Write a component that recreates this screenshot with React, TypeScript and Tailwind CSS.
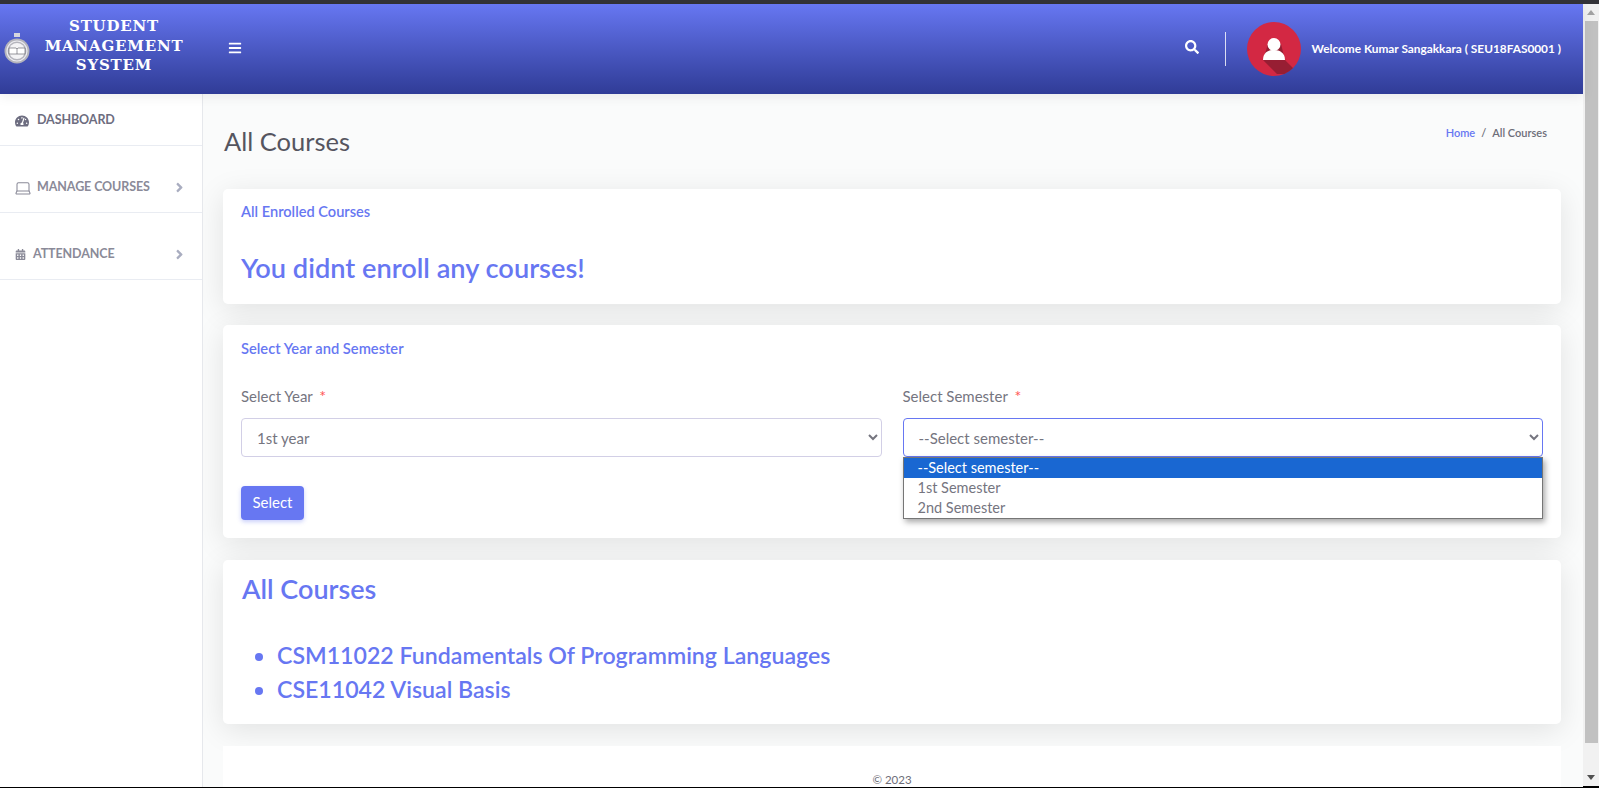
import React from 'react';
import { FaAngleRight, FaBars, FaCalendarAlt, FaSearch, FaTachometerAlt } from 'react-icons/fa';
import { Laptop } from 'lucide-react';

const font = "font-['Lato','Open_Sans',sans-serif]";

const Logo = () => (
  <svg width="26" height="32" viewBox="0 0 26 32" className="shrink-0">
    <rect x="10" y="0" width="6" height="4" fill="#d5d5de" />
    <circle cx="13" cy="18" r="12.5" fill="#b4b4bc" />
    <circle cx="13" cy="18" r="10" fill="none" stroke="#ececf0" strokeWidth="1.2" />
    <circle cx="13" cy="18" r="8" fill="#f4f4f6" />
    <path d="M5 15h7l1 1 1-1h7v6h-16z" fill="#fff" stroke="#55555f" strokeWidth="0.6" />
    <path d="M13 16v5" stroke="#55555f" strokeWidth="0.6" />
  </svg>
);

const Avatar = () => (
  <div className="w-[54px] h-[54px] rounded-full bg-[#d32843] overflow-hidden shrink-0">
    <svg width="54" height="54" viewBox="0 0 54 54">
      <path d="M16 38 L21 22 L34 22 L38 38 L52 52 L30 52 Z" fill="#7d1a2c" opacity="0.7" />
      <circle cx="27" cy="22.5" r="6.5" fill="#fff" />
      <path d="M16 38 c0-7 5-10 11-10 s11 3 11 10 z" fill="#fff" />
    </svg>
  </div>
);

const SideItem = ({ icon, label, arrow, tone, gap }: { icon: React.ReactNode; label: string; arrow?: boolean; tone: string; gap: string }) => (
  <div className={`h-[67px] border-b border-[#e9ecf2] flex items-center pl-[15px] pr-[15px] pt-[17px] ${gap}`}>
    {icon}
    <span className={`flex-1 text-[12.5px] font-bold tracking-[-0.1px] ${tone}`}>{label}</span>
    {arrow && <FaAngleRight className="text-[#a9adc0] text-[15px]" />}
  </div>
);

const Card = ({ children, className }: { children: React.ReactNode; className?: string }) => (
  <div className={`bg-white rounded-[5px] shadow-[0_6px_30px_rgba(0,0,0,0.1)] ${className ?? ''}`}>{children}</div>
);

const App: React.FC = () => {
  return (
    <div className={`h-[788px] w-full overflow-hidden flex flex-col bg-black ${font}`}>
      <div className="h-[4px] bg-[#333338] shrink-0" />
      <div className="flex flex-1 min-h-0">
        <div className="flex-1 min-w-0 flex flex-col">
          {/* Header */}
          <header className="h-[90px] shrink-0 flex items-center bg-gradient-to-b from-[#6777f2] to-[#303c97] text-white relative z-10 shadow-[0_2px_12px_rgba(0,0,0,0.08)]">
            <div className="w-[203px] flex items-center pl-[4px] shrink-0">
              <Logo />
              <div className="flex-1 text-center font-['DejaVu_Serif',serif] font-bold text-[15px] leading-[19.5px] tracking-[0.8px] pr-[5px] mb-[5px]">
                STUDENT<br />MANAGEMENT<br />SYSTEM
              </div>
            </div>
            <FaBars className="ml-[25px] text-[14px] mb-[2px]" />
            <div className="flex-1" />
            <FaSearch className="text-[14px] mb-[4px]" />
            <div className="w-px h-[34px] bg-white/80 ml-[26px] mr-[21px]" />
            <Avatar />
            <span className="ml-[10px] mr-[22px] text-[11.85px] font-bold">Welcome Kumar Sangakkara ( SEU18FAS0001 )</span>
          </header>

          <div className="flex flex-1 min-h-0">
            {/* Sidebar */}
            <aside className="w-[203px] shrink-0 bg-white border-r border-[#e6e8ec] relative z-[5]">
              <div className="h-[52px] border-b border-[#e9ecf2] flex items-center pl-[15px] pt-[2px] gap-[8px]">
                <FaTachometerAlt className="text-[#6d6d80] text-[14px]" />
                <span className="text-[12.5px] font-bold tracking-[-0.1px] text-[#6d6d80]">DASHBOARD</span>
              </div>
              <SideItem icon={<Laptop size={18} strokeWidth={1.4} className="text-[#8a8a98] -ml-px" />} label="MANAGE COURSES" arrow tone="text-[#8a8a98]" gap="gap-[5px]" />
              <SideItem icon={<FaCalendarAlt className="text-[#8a8a98] text-[11px]" />} label="ATTENDANCE" arrow tone="text-[#8a8a98]" gap="gap-[7px]" />
            </aside>

            {/* Content */}
            <main className="flex-1 min-w-0 bg-[#fafbfb] pl-[20px] pr-[22px] overflow-hidden">
              <div className="h-[95px] flex justify-between">
                <h1 className="text-[25.5px] text-[#55555f] mt-[31px] ml-px leading-[32px]">All Courses</h1>
                <div className="text-[11px] font-semibold mt-[31px] mr-[14px] text-[#6d6d78]">
                  <span className="text-[#6777f2]">Home</span>
                  <span className="mx-[6px]">/</span>
                  <span>All Courses</span>
                </div>
              </div>

              <Card className="h-[115px] pl-[18px] pt-[12px]">
                <h6 className="text-[14.6px] font-semibold text-[#6777f2]">All Enrolled Courses</h6>
                <h3 className="text-[27.2px] font-semibold text-[#6777f2] mt-[27px] leading-[36px]">You didnt enroll any courses!</h3>
              </Card>

              <Card className="h-[213px] mt-[21px] px-[18px] pt-[12px]">
                <h6 className="text-[14.7px] font-semibold text-[#6777f2]">Select Year and Semester</h6>
                <div className="grid grid-cols-2 gap-[21px] mt-[27px]">
                  <div>
                    <label className="block text-[15px] leading-[18px] text-[#75757f] h-[26px] pt-[1px]">Select Year <span className="text-[#f55] text-[16px] ml-[3px]">*</span></label>
                    <select defaultValue="1" className="w-full h-[39px] mt-[6px] pl-[11px] bg-white rounded-[4px] border border-[#d2cfe6] text-[15px] text-[#75757f]">
                      <option value="1">1st year</option>
                    </select>
                  </div>
                  <div className="relative">
                    <label className="block text-[15px] leading-[18px] text-[#75757f] h-[26px] pt-[1px]">Select Semester <span className="text-[#f55] text-[16px] ml-[3px]">*</span></label>
                    <select className="w-full h-[39px] mt-[6px] pl-[11px] bg-white rounded-[4px] border border-[#6777f2] text-[15px] text-[#75757f]">
                      <option>--Select semester--</option>
                    </select>
                    {/* open native dropdown list */}
                    <div className="absolute left-0 right-0 top-[71px] h-[62px] bg-white border border-[#767676] text-[14.5px] leading-[20px] text-[#75757f] shadow-[2px_3px_6px_rgba(0,0,0,0.35)] z-10">
                      <div className="bg-[#1967d2] text-white pl-[14px]">--Select semester--</div>
                      <div className="pl-[14px]">1st Semester</div>
                      <div className="pl-[14px]">2nd Semester</div>
                    </div>
                  </div>
                </div>
                <button className="mt-[29px] w-[63px] h-[34px] pb-px rounded-[4px] bg-[#6777f2] text-white text-[15px] shadow-[0_2px_4px_rgba(103,119,242,0.35)]">Select</button>
              </Card>

              <Card className="h-[164px] mt-[22px] pl-[19px] pt-[11px]">
                <h2 className="text-[27px] font-semibold text-[#6777f2] leading-[36px]">All Courses</h2>
                <ul className="list-disc pl-[35px] mt-[32px] text-[#6777f2] text-[23.15px] font-semibold leading-[33.5px]">
                  <li>CSM11022 Fundamentals Of Programming Languages</li>
                  <li>CSE11042 Visual Basis</li>
                </ul>
              </Card>

              <div className="bg-white mt-[22px] h-[60px] pt-[26px] text-center text-[11.5px] leading-[16px] text-[#6d6d78]">© 2023</div>
            </main>
          </div>
        </div>

        {/* Scrollbar */}
        <div className="w-[16px] shrink-0 bg-[#f1f1f1] flex flex-col items-center mb-px">
          <svg width="8" height="5" viewBox="0 0 8 5" className="mt-[6px]"><path d="M4 0l4 5H0z" fill="#a3a3a3" /></svg>
          <div className="w-[13px] h-[722px] bg-[#c1c1c1] mt-[6px] ml-px" />
          <div className="flex-1" />
          <svg width="8" height="5" viewBox="0 0 8 5" className="mb-[6px]"><path d="M4 5l4-5H0z" fill="#505050" /></svg>
        </div>
      </div>
      <div className="h-px bg-black shrink-0" />
    </div>
  );
};

export default App;
